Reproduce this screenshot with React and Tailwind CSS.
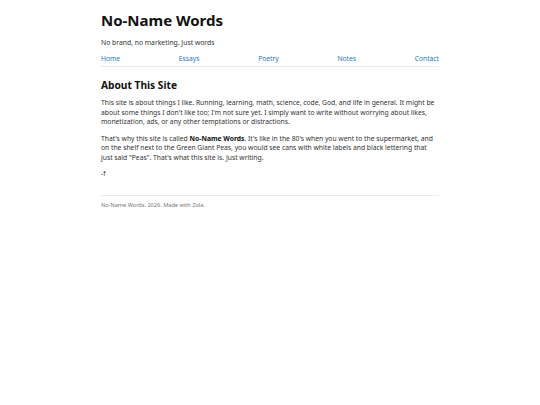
export default function App() {
  return (
    <div className="min-h-[405px] bg-white" style={{ fontFamily: '"Noto Sans", sans-serif' }}>
      <div className="mx-auto w-[338px] pt-[10px]">
        <header>
          <h1 className="text-[15px] font-bold leading-[20px] text-[#111]">No-Name Words</h1>
          <p className="mt-[7.5px] text-[6.8px] leading-[9px] text-[#333]">No brand, no marketing. Just words</p>
          <nav className="mt-[7px] flex justify-between border-b border-[#ebebeb] pb-[3.5px] text-[6.7px] leading-[9px] text-[#2a7ab8]">
            <a href="#">Home</a>
            <a href="#">Essays</a>
            <a href="#">Poetry</a>
            <a href="#">Notes</a>
            <a href="#">Contact</a>
          </nav>
        </header>

        <main className="mt-[11px]">
          <h2 className="text-[10.2px] font-bold leading-[14px] text-[#111]">About This Site</h2>
          <div className="mt-[6px] space-y-[7px] text-[6.75px] leading-[9.5px] text-[#333]">
            <p>
              This site is about things I like. Running, learning, math, science, code, God, and life in general. It might be
              about some things I don't like too; I'm not sure yet. I simply want to write without worrying about likes,
              monetization, ads, or any other temptations or distractions.
            </p>
            <p>
              That's why this site is called <strong className="font-bold text-[#111]">No-Name Words</strong>. It's like in the 80's when you went to the supermarket, and
              on the shelf next to the Green Giant Peas, you would see cans with white labels and black lettering that
              just said "Peas". That's what this site is. Just writing.
            </p>
            <p>-f</p>
          </div>
        </main>

        <footer className="mt-[16px] border-t border-[#ebebeb] pt-[6px] text-[5.6px] leading-[7px] text-[#777]">
          No-Name Words. 2026. Made with Zola.
        </footer>
      </div>
    </div>
  )
}
